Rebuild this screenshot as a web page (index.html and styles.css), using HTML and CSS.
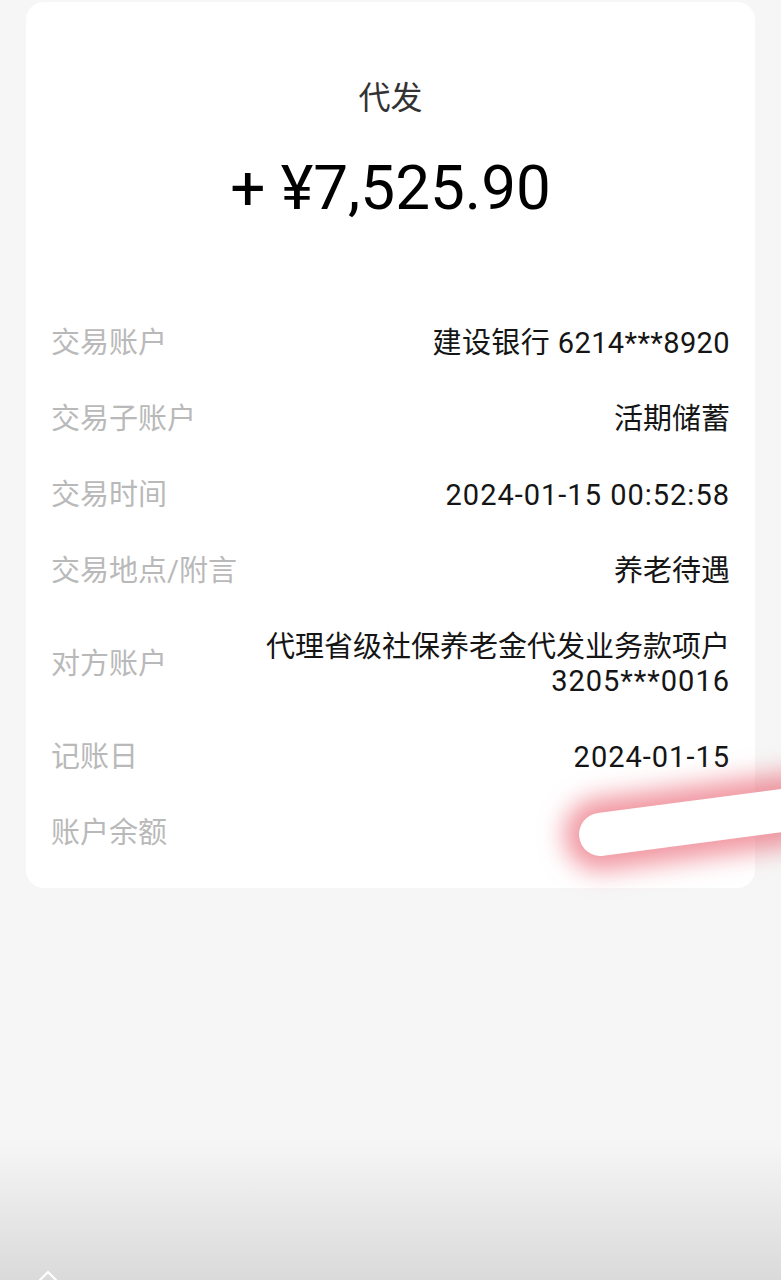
FILE: index.html
```html
<!DOCTYPE html>
<html lang="zh-CN">
<head>
<meta charset="utf-8">
<title>代发</title>
<link rel="stylesheet" href="styles.css">
</head>
<body>
<div class="page">
  <section class="card">
    <div class="title">代发</div>
    <div class="amount">+ ¥7,525.90</div>
    <div class="rows">
      <div class="row"><span class="label">交易账户</span><span class="value mixed">建设银行 6214***8920</span></div>
      <div class="row"><span class="label">交易子账户</span><span class="value">活期储蓄</span></div>
      <div class="row"><span class="label">交易时间</span><span class="value num">2024-01-15 00:52:58</span></div>
      <div class="row"><span class="label">交易地点/附言</span><span class="value">养老待遇</span></div>
      <div class="row"><span class="label">对方账户</span><span class="value">代理省级社保养老金代发业务款项户<br><span class="num">3205***0016</span></span></div>
      <div class="row"><span class="label">记账日</span><span class="value num">2024-01-15</span></div>
      <div class="row"><span class="label">账户余额</span><span class="value"></span></div>
    </div>
  </section>
  <div class="smear"></div>
  <svg class="chevron" width="22" height="14" viewBox="0 0 22 14"><path d="M3 13 L11 5 L19 13" fill="none" stroke="#ffffff" stroke-width="2.2" stroke-linecap="round" stroke-linejoin="round"/></svg>
</div>
</body>
</html>
```
FILE: styles.css
```css
html, body {
  margin: 0;
  padding: 0;
}
body {
  font-family: Roboto, "Noto Sans CJK SC", sans-serif;
  background: linear-gradient(to bottom, #f6f6f6 0, #f6f6f6 1140px, #dadada 1280px);
  height: 1280px;
  overflow: hidden;
}
.page {
  position: relative;
  height: 1280px;
  padding-top: 2px;
  box-sizing: border-box;
  overflow: hidden;
}
.card {
  margin: 0 26px;
  background: #ffffff;
  border-radius: 18px;
  padding-bottom: 17px;
}
.title {
  padding-top: 76px;
  text-align: center;
  font-size: 32px;
  line-height: 40px;
  color: #333333;
}
.amount {
  margin-top: 35px;
  text-align: center;
  font-size: 62px;
  line-height: 70px;
  color: #000000;
}
.rows {
  margin-top: 82px;
}
.row {
  display: flex;
  justify-content: space-between;
  align-items: center;
  padding: 21px 25px;
  font-size: 29px;
  line-height: 34px;
}
.label {
  color: #b9b9b9;
  white-space: nowrap;
}
.value {
  color: #151515;
  text-align: right;
  min-height: 34px;
}
.num {
  letter-spacing: 1px;
}
.mixed {
  letter-spacing: 0.4px;
}
.smear {
  position: absolute;
  left: 579px;
  top: 813px;
  width: 260px;
  height: 43px;
  border-radius: 22px;
  background: #ffffff;
  box-shadow: 0 0 24px 15px rgba(232, 84, 100, 0.6);
  transform: rotate(-7.5deg);
  transform-origin: 21px 21px;
}
.chevron {
  position: absolute;
  left: 37px;
  top: 1267px;
}
```
